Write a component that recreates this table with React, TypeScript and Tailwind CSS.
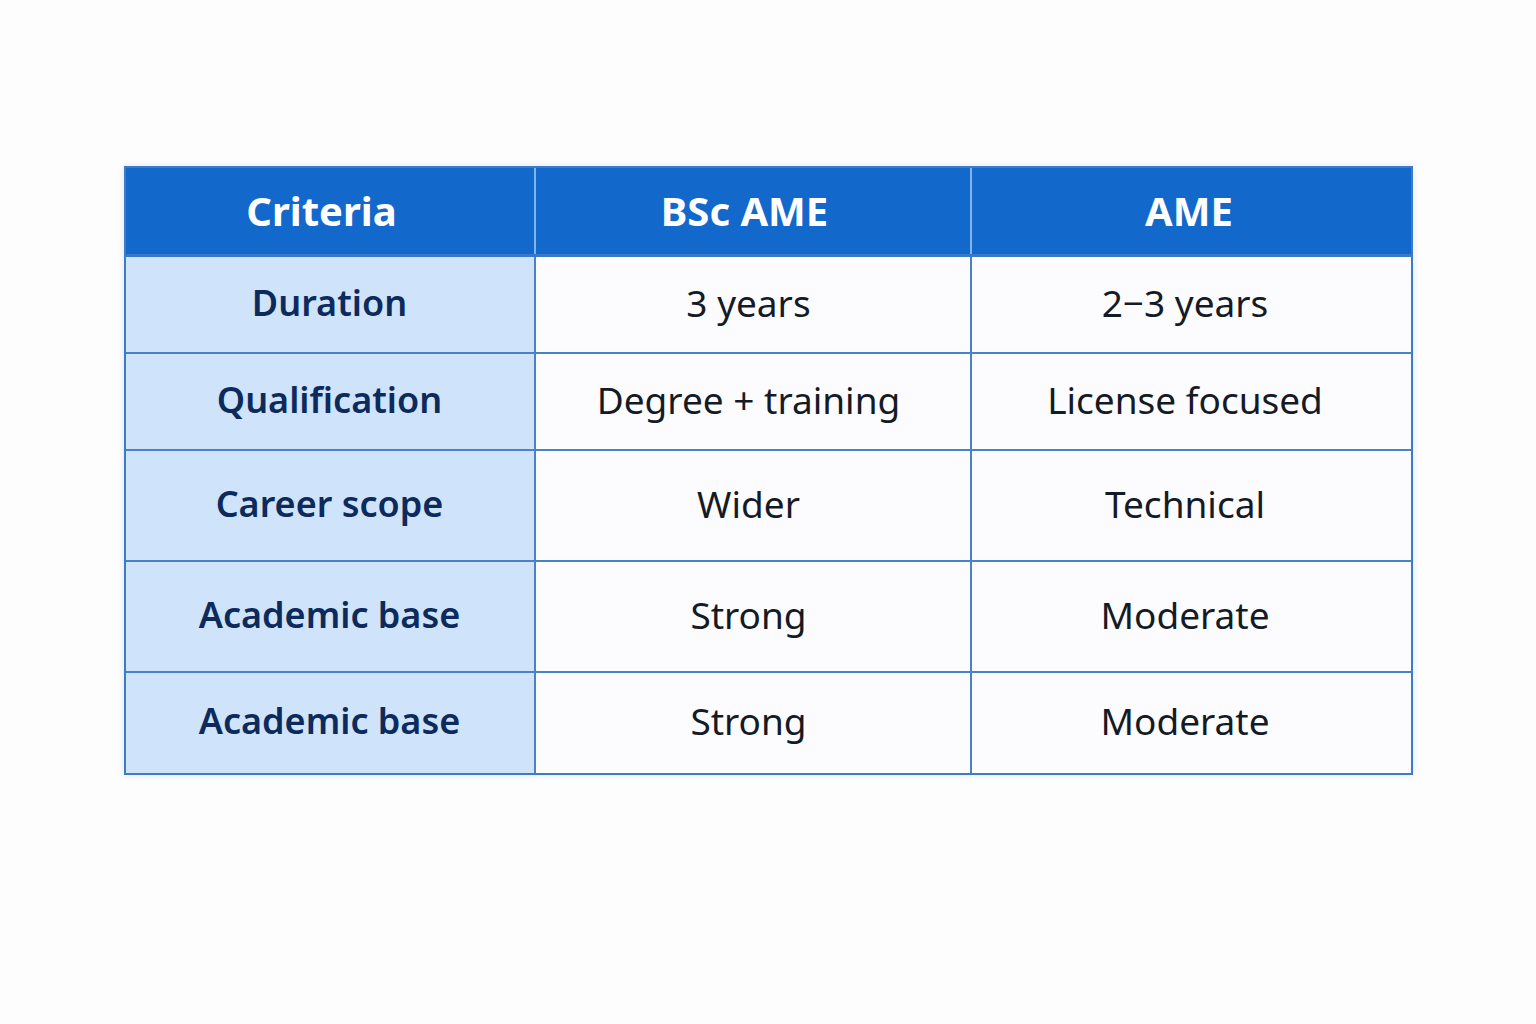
const rows = [
  { c: "Duration", b: "3 years", a: "2−3 years", h: "h-[97px]" },
  { c: "Qualification", b: "Degree + training", a: "License focused", h: "h-[97px]" },
  { c: "Career scope", b: "Wider", a: "Technical", h: "h-[111px]" },
  { c: "Academic base", b: "Strong", a: "Moderate", h: "h-[111px]" },
  { c: "Academic base", b: "Strong", a: "Moderate", h: "h-[100px]" },
];

export default function App() {
  return (
    <div className="min-h-screen bg-[#fdfdfe] pt-[166px] font-['Noto_Sans',sans-serif]">
      <div className="mx-auto w-[1289px] border-2 border-[#3f7ac4] shadow-[0_0_6px_rgba(40,90,170,0.15)]">
        <div className="grid h-[89px] grid-cols-[410px_436px_1fr] border-b-[3px] border-[#3a78c8] bg-[#1368cc] text-[40px] font-bold text-white">
          <div className="flex items-center justify-center border-r-2 border-[#7fb4ec] pr-4">Criteria</div>
          <div className="flex items-center justify-center border-r-2 border-[#7fb4ec] pr-4">BSc AME</div>
          <div className="flex items-center justify-center pr-1">AME</div>
        </div>
        {rows.map((r, i) => (
          <div
            key={i}
            className={`grid ${r.h} grid-cols-[410px_436px_1fr] ${i < rows.length - 1 ? "border-b-2 border-[#4a82c8]" : ""}`}
          >
            <div className="flex items-center justify-center border-r-2 border-[#4a82c8] bg-[#cfe3fa] pb-1 text-[36px] font-semibold text-[#0c2b5c]">
              {r.c}
            </div>
            <div className="flex items-center justify-center border-r-2 border-[#4a82c8] bg-[#fcfcfe] pb-1 pr-2 text-[37px] text-[#141a26]">
              {r.b}
            </div>
            <div className="flex items-center justify-center bg-[#fcfcfe] pb-1 pr-3 text-[37px] text-[#141a26]">{r.a}</div>
          </div>
        ))}
      </div>
    </div>
  );
}
